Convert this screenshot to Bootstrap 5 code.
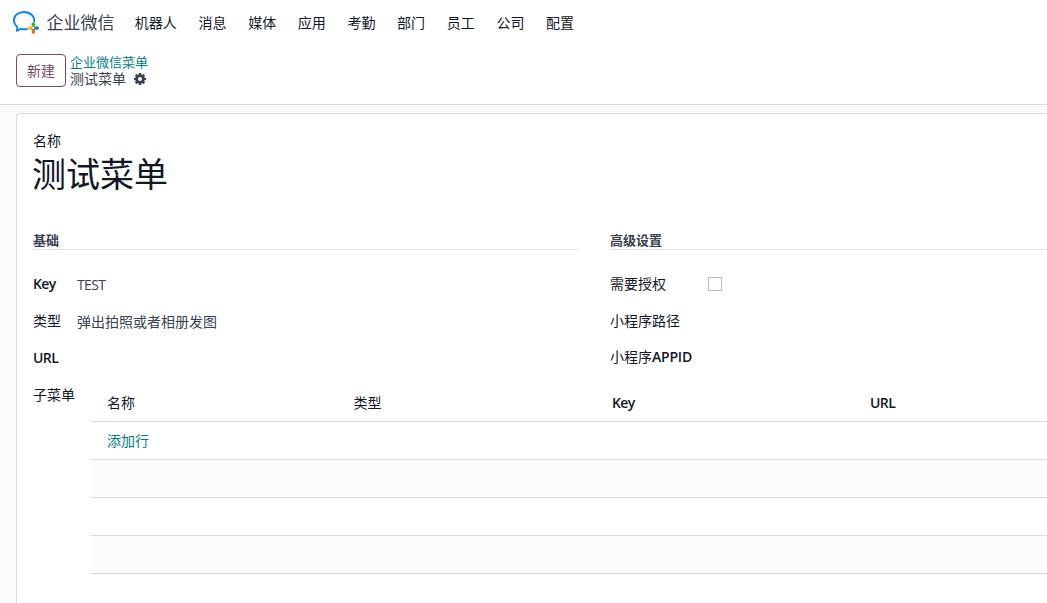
<!DOCTYPE html>
<html lang="zh-CN">
<head>
<meta charset="utf-8">
<meta name="viewport" content="width=device-width, initial-scale=1">
<title>企业微信菜单</title>
<link href="https://cdn.jsdelivr.net/npm/bootstrap@5.3.0/dist/css/bootstrap.min.css" rel="stylesheet">
<style>
  body { font: 14px/20px "Open Sans", "Noto Sans CJK SC", sans-serif; color: #374151; background: #f9fafb; height: 100vh; overflow: hidden; }
  .topbar { height: 46px; padding-left: 12px; }
  .brand-name { font-size: 17px; line-height: 24px; margin: 0 9.5px 0 6.5px; }
  .topbar .nav-link { color: #111827; padding: 0 10.83px; }
  .control-panel { height: 59px; padding: 8px 16px 0; border-bottom: 1px solid #d8dadd; }
  .btn-new { --bs-btn-color: #714b67; --bs-btn-border-color: #714b67; --bs-btn-padding-x: 9px; --bs-btn-padding-y: 5px; --bs-btn-font-size: 14px; --bs-btn-border-radius: 4px; height: 33px; width: 50px; line-height: 21px; }
  .crumbs { margin: 0 0 0 4px; line-height: 17px; }
  .crumb-parent { font-size: 13px; height: 16px; }
  .crumb-parent a { display: block; }
  .teal { color: #017e84; }
  .sheet { margin: 8px 0 0 16px; padding: 17px 0 0 16px; border-color: #d8dadd; border-radius: 4px 0 0 0; color: #374151; }
  .ink { color: #111827; }
  .record-title { font-size: 34px; line-height: 44px; font-weight: 400; margin: 1px 0 0 -1px; }
  .groups { display: grid; grid-template-columns: 545px 1fr; column-gap: 32px; margin-top: 35px; }
  .group-title { font-size: 13px; line-height: 18px; font-weight: 700; height: 19px; margin: 0 0 17px; border-bottom: 1px solid #dfe1e4; }
  .field { height: 36.7px; padding-top: 8px; }
  .caption { font-weight: 600; letter-spacing: -.6px; color: #111827; flex: none; margin-top: -1px; }
  .caption.appid { letter-spacing: -.2px; }
  .caption.cjk, .caption .cjk, .lines th.cjk { font-weight: 400; letter-spacing: 0; }
  .latin-value { letter-spacing: -.6px; }
  .left-caption { width: 44px; }
  .right-caption { width: 98px; }
  .tick { width: 14px; height: 14px; border: 1px solid #b9bcc1; margin-top: 2px; }
  .child-caption { width: 58px; }
  .child-lines { margin-top: 6px; }
  .lines { table-layout: fixed; --bs-table-bg: transparent; border-color: #d8dadd; margin: 0; width: 956px; }
  .lines th, .lines td { height: 38px; padding: 9px 8px 0; vertical-align: top; border-bottom: 1px solid #d8dadd; line-height: 20px; }
  .lines th { color: #111827; font-weight: 600; letter-spacing: -.6px; padding-top: 10px; }
  .lines th:first-child, .lines td:first-child { padding-left: 16px; }
  .lines .shade td { background: #fcfcfc; }
</style>
</head>
<body class="d-flex flex-column">
<header class="bg-white flex-shrink-0">
  <nav class="topbar d-flex align-items-center">
    <svg width="28" height="26" viewBox="0 0 28 26" fill="none">
      <path d="M22.200 12.700C23.200 6.500 18.300 2 11.900 2 6.300 2 1.900 5.400 1.900 10.300c0 2.800 1.300 5 3.500 6.700l-.7 3.900 4.100-2.100c2.100.6 4.300.7 6.900 0" stroke="#0e86f0" stroke-width="1.900" stroke-linejoin="round"/>
      <g stroke-width="1.500" stroke-linecap="round">
        <path d="M21.300 14.500c.2 1.500.9 2.400 2 3.100" stroke="#2aae35"/>
        <path d="M25 18c-1.500.2-2.400.9-3.100 2" stroke="#0e6ee8"/>
        <path d="M21.400 21.800c-.2-1.500-.9-2.400-2-3.100" stroke="#fb6500"/>
        <path d="M17.400 18.200c1.500-.2 2.400-.9 3.100-2" stroke="#ffb900"/>
      </g>
      <circle cx="21.300" cy="14.200" r="1.800" fill="#2aae35"/><circle cx="25.200" cy="18" r="1.700" fill="#0e6ee8"/>
      <circle cx="21.400" cy="22" r="1.800" fill="#fb6500"/><circle cx="17.500" cy="18" r="1.800" fill="#ffb900"/>
    </svg>
    <span class="brand-name">企业微信</span>
    <div class="nav flex-nowrap">
      <a class="nav-link" href="#">机器人</a><a class="nav-link" href="#">消息</a><a class="nav-link" href="#">媒体</a><a class="nav-link" href="#">应用</a><a class="nav-link" href="#">考勤</a><a class="nav-link" href="#">部门</a><a class="nav-link" href="#">员工</a><a class="nav-link" href="#">公司</a><a class="nav-link" href="#">配置</a>
    </div>
  </nav>
  <div class="control-panel d-flex align-items-start">
    <button class="btn btn-new" type="button">新建</button>
    <div class="crumbs">
      <div class="crumb-parent"><a class="teal text-decoration-none" href="#">企业微信菜单</a></div>
      <div class="d-flex align-items-center">测试菜单
        <svg class="ms-2" width="12" height="12" viewBox="0 0 12 12"><g fill="#374151"><path id="t" d="M4.800 0h2.400l.4 2.500H4.400zM4.400 9.500h3.200L7.200 12H4.800zM0 4.800l2.500-.4v3.200L0 7.200zM9.500 4.400l2.500.4v2.400l-2.500.4z"/><use href="#t" transform="rotate(45 6 6)"/></g><circle cx="6" cy="6" r="3.200" fill="none" stroke="#374151" stroke-width="2.300"/></svg>
      </div>
    </div>
  </div>
</header>
<main class="d-flex flex-column flex-grow-1">
  <div class="card sheet border-end-0 border-bottom-0 flex-grow-1">
    <div class="ink">名称</div>
    <h1 class="record-title ink">测试菜单</h1>
    <div class="groups">
      <section>
        <h2 class="group-title">基础</h2>
        <div class="field d-flex"><span class="caption left-caption">Key</span><span class="latin-value">TEST</span></div>
        <div class="field d-flex"><span class="caption cjk left-caption">类型</span><span>弹出拍照或者相册发图</span></div>
        <div class="field d-flex"><span class="caption left-caption mt-0">URL</span></div>
      </section>
      <section>
        <h2 class="group-title">高级设置</h2>
        <div class="field d-flex"><span class="caption cjk right-caption">需要授权</span><span class="tick"></span></div>
        <div class="field d-flex"><span class="caption cjk right-caption">小程序路径</span></div>
        <div class="field d-flex"><span class="caption appid"><span class="cjk">小程序</span>APPID</span></div>
      </section>
    </div>
    <div class="d-flex">
      <div class="field child-caption ink flex-shrink-0">子菜单</div>
      <div class="child-lines flex-grow-1 overflow-hidden">
        <table class="table lines">
          <colgroup><col style="width:254.5px"><col style="width:258.5px"><col style="width:258px"><col></colgroup>
          <thead><tr><th class="cjk">名称</th><th class="cjk">类型</th><th>Key</th><th>URL</th></tr></thead>
          <tbody>
            <tr><td colspan="4"><a class="teal text-decoration-none" href="#">添加行</a></td></tr>
            <tr class="shade"><td colspan="4"></td></tr>
            <tr><td colspan="4"></td></tr>
            <tr class="shade"><td colspan="4"></td></tr>
          </tbody>
        </table>
      </div>
    </div>
  </div>
</main>
<script src="https://cdn.jsdelivr.net/npm/bootstrap@5.3.0/dist/js/bootstrap.bundle.min.js"></script>
</body>
</html>
